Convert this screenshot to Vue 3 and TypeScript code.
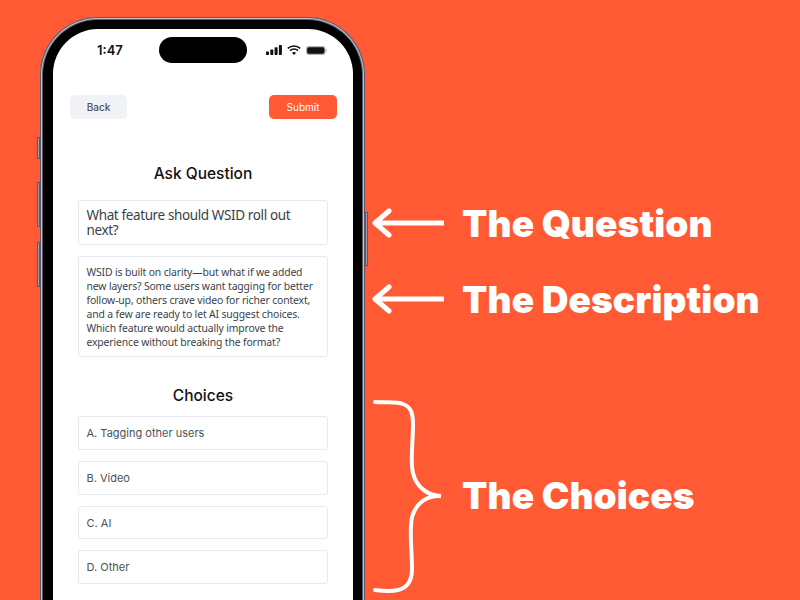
<script setup lang="ts">
const choices: string[] = ['A. Tagging other users', 'B. Video', 'C. AI', 'D. Other']
</script>

<template>
  <div class="page">
    <div class="phone">
      <span class="side-btn left mute"></span>
      <span class="side-btn left vol-up"></span>
      <span class="side-btn left vol-down"></span>
      <span class="side-btn right power"></span>
      <div class="screen">
        <span class="island"></span>
        <div class="status">
          <span class="time">1:47</span>
          <div class="status-icons">
            <svg width="16" height="10" viewBox="0 0 16 10" fill="#111">
              <rect x="0" y="6.5" width="3" height="3.5" rx="0.7" />
              <rect x="4.3" y="4.5" width="3" height="5.5" rx="0.7" />
              <rect x="8.6" y="2.3" width="3" height="7.7" rx="0.7" />
              <rect x="12.9" y="0" width="3" height="10" rx="0.7" />
            </svg>
            <svg width="14" height="10" viewBox="0 0 14 10" fill="none" stroke="#111" stroke-width="1.7">
              <path d="M0.8 3.4C4.3 0.2 9.7 0.2 13.2 3.4" />
              <path d="M3 5.6C5.3 3.6 8.7 3.6 11 5.6" />
              <path d="M7 10L4.9 7.7C6.1 6.7 7.9 6.7 9.1 7.7Z" fill="#111" stroke="none" />
            </svg>
            <svg width="21" height="9" viewBox="0 0 21 9">
              <rect x="0.6" y="0.6" width="18.4" height="7.8" rx="2.4" fill="#111" stroke="#b5b5b5" stroke-width="1.2" />
              <path d="M19.8 3V6C20.5 5.8 20.9 5.2 20.9 4.5S20.5 3.2 19.8 3Z" fill="#b5b5b5" />
            </svg>
          </div>
        </div>
        <div class="nav">
          <button class="btn back">Back</button>
          <button class="btn submit">Submit</button>
        </div>
        <div class="form">
          <h2 class="title">Ask Question</h2>
          <div class="box question">What feature should WSID roll out next?</div>
          <div class="box description">WSID is built on clarity—but what if we added new layers? Some users want tagging for better follow-up, others crave video for richer context, and a few are ready to let AI suggest choices. Which feature would actually improve the experience without breaking the format?</div>
          <h2 class="title choices-title">Choices</h2>
          <div class="choices">
            <div v-for="c in choices" :key="c" class="box choice">{{ c }}</div>
          </div>
        </div>
      </div>
    </div>

    <div class="notes">
      <div class="note note-question">
        <svg class="arrow" width="76" height="30" viewBox="0 0 76 30" fill="none" stroke="#fff" stroke-width="5" stroke-linecap="round" stroke-linejoin="round">
          <path d="M72 15H4" stroke-linecap="butt" />
          <path d="M17 3L3 15L17 27" />
        </svg>
        <span class="label">The Question</span>
      </div>
      <div class="note note-description">
        <svg class="arrow" width="76" height="30" viewBox="0 0 76 30" fill="none" stroke="#fff" stroke-width="5" stroke-linecap="round" stroke-linejoin="round">
          <path d="M72 15H4" stroke-linecap="butt" />
          <path d="M17 3L3 15L17 27" />
        </svg>
        <span class="label">The Description</span>
      </div>
      <div class="note note-choices">
        <svg class="arrow" width="76" height="196" viewBox="0 0 76 196" fill="none" stroke="#fff" stroke-width="4" stroke-linecap="round">
          <path d="M3 3C14 4 24 2 31 5C39 8 41 14 41 26C41 44 38 62 41 74C44 87 55 97 69 97C55 96 44 104 40 118C37 132 40 150 40 170C40 182 35 189 26 191C18 193 10 192 3 191" />
        </svg>
        <span class="label label-choices">The Choices</span>
      </div>
    </div>
  </div>
</template>

<style scoped>
.page {
  width: 800px;
  height: 600px;
  overflow: hidden;
  display: flex;
  align-items: flex-start;
  background: #ff5a33;
}
.phone {
  position: relative;
  flex: none;
  width: 325px;
  height: 720px;
  box-sizing: border-box;
  margin: 17px 0 0 40px;
  padding: 12px 12px 12px 13px;
  background: #000;
  border-radius: 58px;
  box-shadow: inset 0 0 0 1px #5d5869, inset 0 0 0 2px #c4c0cc, inset 0 0 0 3px #5d5869;
}
.side-btn {
  position: absolute;
  width: 3px;
  background: #a09cae;
  border: 1px solid #5d5869;
  box-sizing: border-box;
}
.left {
  left: -3px;
}
.right {
  right: -3px;
}
.mute {
  top: 120px;
  height: 22px;
}
.vol-up {
  top: 165px;
  height: 45px;
}
.vol-down {
  top: 225px;
  height: 45px;
}
.power {
  top: 195px;
  height: 54px;
}
.screen {
  position: relative;
  height: 100%;
  background: #fff;
  border-radius: 45px;
  overflow: hidden;
}
.island {
  position: absolute;
  left: 106px;
  top: 8px;
  width: 88px;
  height: 26px;
  border-radius: 13px;
  background: #000;
}
.status {
  height: 42px;
  display: flex;
  align-items: center;
  justify-content: space-between;
  padding: 0 26px 0 44px;
  font-family: Inter, sans-serif;
}
.time {
  font-size: 13px;
  font-weight: 600;
  color: #111;
}
.status-icons {
  display: flex;
  align-items: center;
  gap: 5px;
}
.status-icons svg {
  display: block;
}
.nav {
  display: flex;
  justify-content: space-between;
  margin-top: 24px;
  padding: 0 16px 0 17px;
}
.btn {
  height: 24px;
  border: none;
  border-radius: 5px;
  padding: 0;
  font-family: Inter, sans-serif;
  font-size: 10px;
  font-weight: 500;
}
.back {
  width: 57px;
  background: #f1f2f6;
  color: #50535c;
}
.submit {
  width: 68px;
  background: #ff5a33;
  color: #fff;
  font-weight: 400;
}
.form {
  display: flex;
  flex-direction: column;
  padding: 0 25px;
  margin-top: 44px;
}
.title {
  margin: 0 0 15px;
  height: 22px;
  line-height: 22px;
  text-align: center;
  font-family: Inter, sans-serif;
  font-size: 15.5px;
  font-weight: 500;
  color: #111;
}
.box {
  box-sizing: border-box;
  background: #fff;
  border: 1px solid #e8e9ee;
  border-radius: 3px;
  padding: 0 7.5px;
  color: #3a3f4a;
}
.question {
  height: 45px;
  padding-top: 7px;
  font-family: "Noto Sans", sans-serif;
  font-size: 13.5px;
  letter-spacing: -0.38px;
  line-height: 15px;
  margin-bottom: 11px;
}
.description {
  height: 101px;
  padding-top: 8px;
  font-family: "Noto Sans", sans-serif;
  font-size: 10.4px;
  letter-spacing: -0.14px;
  line-height: 14px;
}
.choices-title {
  margin: 28px 0 9.4px;
}
.choices {
  display: flex;
  flex-direction: column;
  gap: 11px;
}
.choice {
  height: 33.7px;
  display: flex;
  align-items: center;
  font-family: Inter, sans-serif;
  font-size: 11px;
  color: #4b5058;
}
.notes {
  display: flex;
  flex-direction: column;
  margin: 203px 0 0 7px;
}
.note {
  display: flex;
  align-items: center;
}
.note-question,
.note-description {
  height: 40px;
}
.note-description {
  margin-top: 36px;
}
.note-choices {
  margin-top: 80px;
  height: 196px;
}
.arrow {
  flex: none;
  display: block;
  margin-right: 14px;
}
.label {
  font-family: Inter, sans-serif;
  font-size: 37px;
  font-weight: 900;
  color: #fff;
  white-space: nowrap;
  letter-spacing: 0.1px;
}
.label-choices {
  padding-bottom: 4px;
}
</style>
